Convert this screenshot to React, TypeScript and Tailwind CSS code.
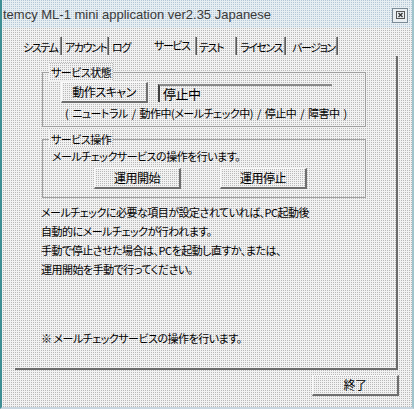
import React from "react";

const jp = "font-['Noto_Sans_CJK_JP',sans-serif] [font-feature-settings:'palt'] text-[11px] tracking-[-0.5px] text-black whitespace-nowrap";
const dither = "bg-[conic-gradient(#b8b8b8_0_25%,#f2f2f2_0)] bg-[length:2px_2px]";

function Btn({ children, className = "" }: { children: React.ReactNode; className?: string }) {
  return (
    <div
      className={`flex items-center justify-center h-[21px] w-[87px] border-t border-l border-t-[#fafafa] border-l-[#fafafa] border-r-2 border-b-2 border-r-[#6e6e6e] border-b-[#6e6e6e] ${dither} ${jp} text-[12px] ${className}`}
    >
      {children}
    </div>
  );
}

function Group({ label, className = "", children }: { label: string; className?: string; children: React.ReactNode }) {
  return (
    <div className={`relative w-[324px] border border-[#a0a0a0] ${className}`}>
      <span className={`absolute left-[6px] top-[-10px] px-[2px] leading-[18px] ${dither} ${jp}`}>{label}</span>
      {children}
    </div>
  );
}

function Sep() {
  return <div className="shrink-0 w-[2px] h-[18px] bg-[#8a8a8a] border-r border-r-[#5a5a5a]" />;
}

const tab = "shrink-0 font-['Noto_Sans_CJK_JP',sans-serif] [font-feature-settings:'palt'] text-[11px] tracking-[-1.4px] text-black whitespace-nowrap leading-[14px]";

export default function App() {
  return (
    <div className={`w-[414px] h-[409px] flex flex-col border-l-2 border-l-[#3f8f95] border-r-2 border-r-[#9fc4cc] border-b-2 border-b-[#c8d6e0] ${dither}`}>
      {/* title bar */}
      <div className="h-[28px] flex items-center bg-[conic-gradient(#b4c6d6_0_25%,#e6eef2_0)] bg-[length:2px_2px]">
        <span className="ml-[1px] font-['Liberation_Sans',sans-serif] text-[13px] text-[#3a3a3a] leading-none whitespace-nowrap">
          temcy ML-1 mini application ver2.35 Japanese
        </span>
        <div className="ml-auto mr-[4px] mt-[2px] w-[16px] h-[15px] border border-[#7a8a96] flex items-center justify-center bg-[#e8eef2]">
          <svg width="9" height="8" viewBox="0 0 9 8">
            <rect x="0.5" y="0.5" width="8" height="7" fill="none" stroke="#555" />
            <path d="M2.5 2 L6.5 6 M6.5 2 L2.5 6" stroke="#333" strokeWidth="1.3" />
          </svg>
        </div>
      </div>

      {/* tabs */}
      <div className="flex items-center h-[20px] mt-[8px] pl-[18px]">
        <span className={`${tab} w-[40px] pl-[3px] mt-[2px]`}>システム</span>
        <Sep />
        <span className={`${tab} w-[45px] pl-[3px] mt-[2px]`}>アカウント</span>
        <Sep />
        <span className={`${tab} w-[45px] pl-[3px] mt-[2px]`}>ログ</span>
        <span className={`${tab} w-[41px] mt-[-2px]`}>サービス</span>
        <Sep />
        <span className={`${tab} w-[38px] pl-[2px] mt-[2px]`}>テスト</span>
        <Sep />
        <span className={`${tab} w-[47px] pl-[3px] mt-[2px]`}>ライセンス</span>
        <Sep />
        <span className={`${tab} w-[50px] pl-[6px] mt-[2px]`}>バージョン</span>
        <Sep />
      </div>

      {/* panel */}
      <div className="ml-[13px] w-[383px] h-[314px] border-r-2 border-b-2 border-r-[#6a6a6a] border-b-[#6a6a6a] pl-[27px] pt-[16px] flex flex-col">
        <Group label="サービス状態" className="h-[55px]">
          <div className="flex mt-[9px] ml-[18px] items-start">
            <Btn>動作スキャン</Btn>
            <div className={`ml-[10px] mt-[2px] w-[174px] h-[18px] border-t-2 border-l-2 border-t-[#888] border-l-[#404040] flex items-center pl-[3px] ${jp} text-[13px]`}>
              停止中
            </div>
          </div>
          <div className={`flex gap-[4px] ml-[22px] mt-[2px] leading-[16px] ${jp}`}>
            <span>(</span>
            <span>ニュートラル</span>
            <span>/</span>
            <span>動作中(メールチェック中)</span>
            <span>/</span>
            <span>停止中</span>
            <span>/</span>
            <span>障害中</span>
            <span>)</span>
          </div>
        </Group>

        <Group label="サービス操作" className="h-[59px] mt-[12px]">
          <div className={`ml-[9px] mt-[8px] leading-[16px] ${jp}`}>メールチェックサービスの操作を行います。</div>
          <div className="flex ml-[51px] mt-[4px] gap-[39px]">
            <Btn>運用開始</Btn>
            <Btn>運用停止</Btn>
          </div>
        </Group>

        <div className={`ml-[-1px] mt-[5px] leading-[19px] ${jp}`}>
          <div>メールチェックに必要な項目が設定されていれば、PC起動後</div>
          <div>自動的にメールチェックが行われます。</div>
          <div>手動で停止させた場合は、PCを起動し直すか、または、</div>
          <div>運用開始を手動で行ってください。</div>
        </div>

        <div className={`ml-[-1px] mt-[50px] leading-[19px] ${jp}`}>※ メールチェックサービスの操作を行います。</div>
      </div>

      <div className="flex mt-[5px]">
        <Btn className="ml-[310px]">終了</Btn>
      </div>
    </div>
  );
}
